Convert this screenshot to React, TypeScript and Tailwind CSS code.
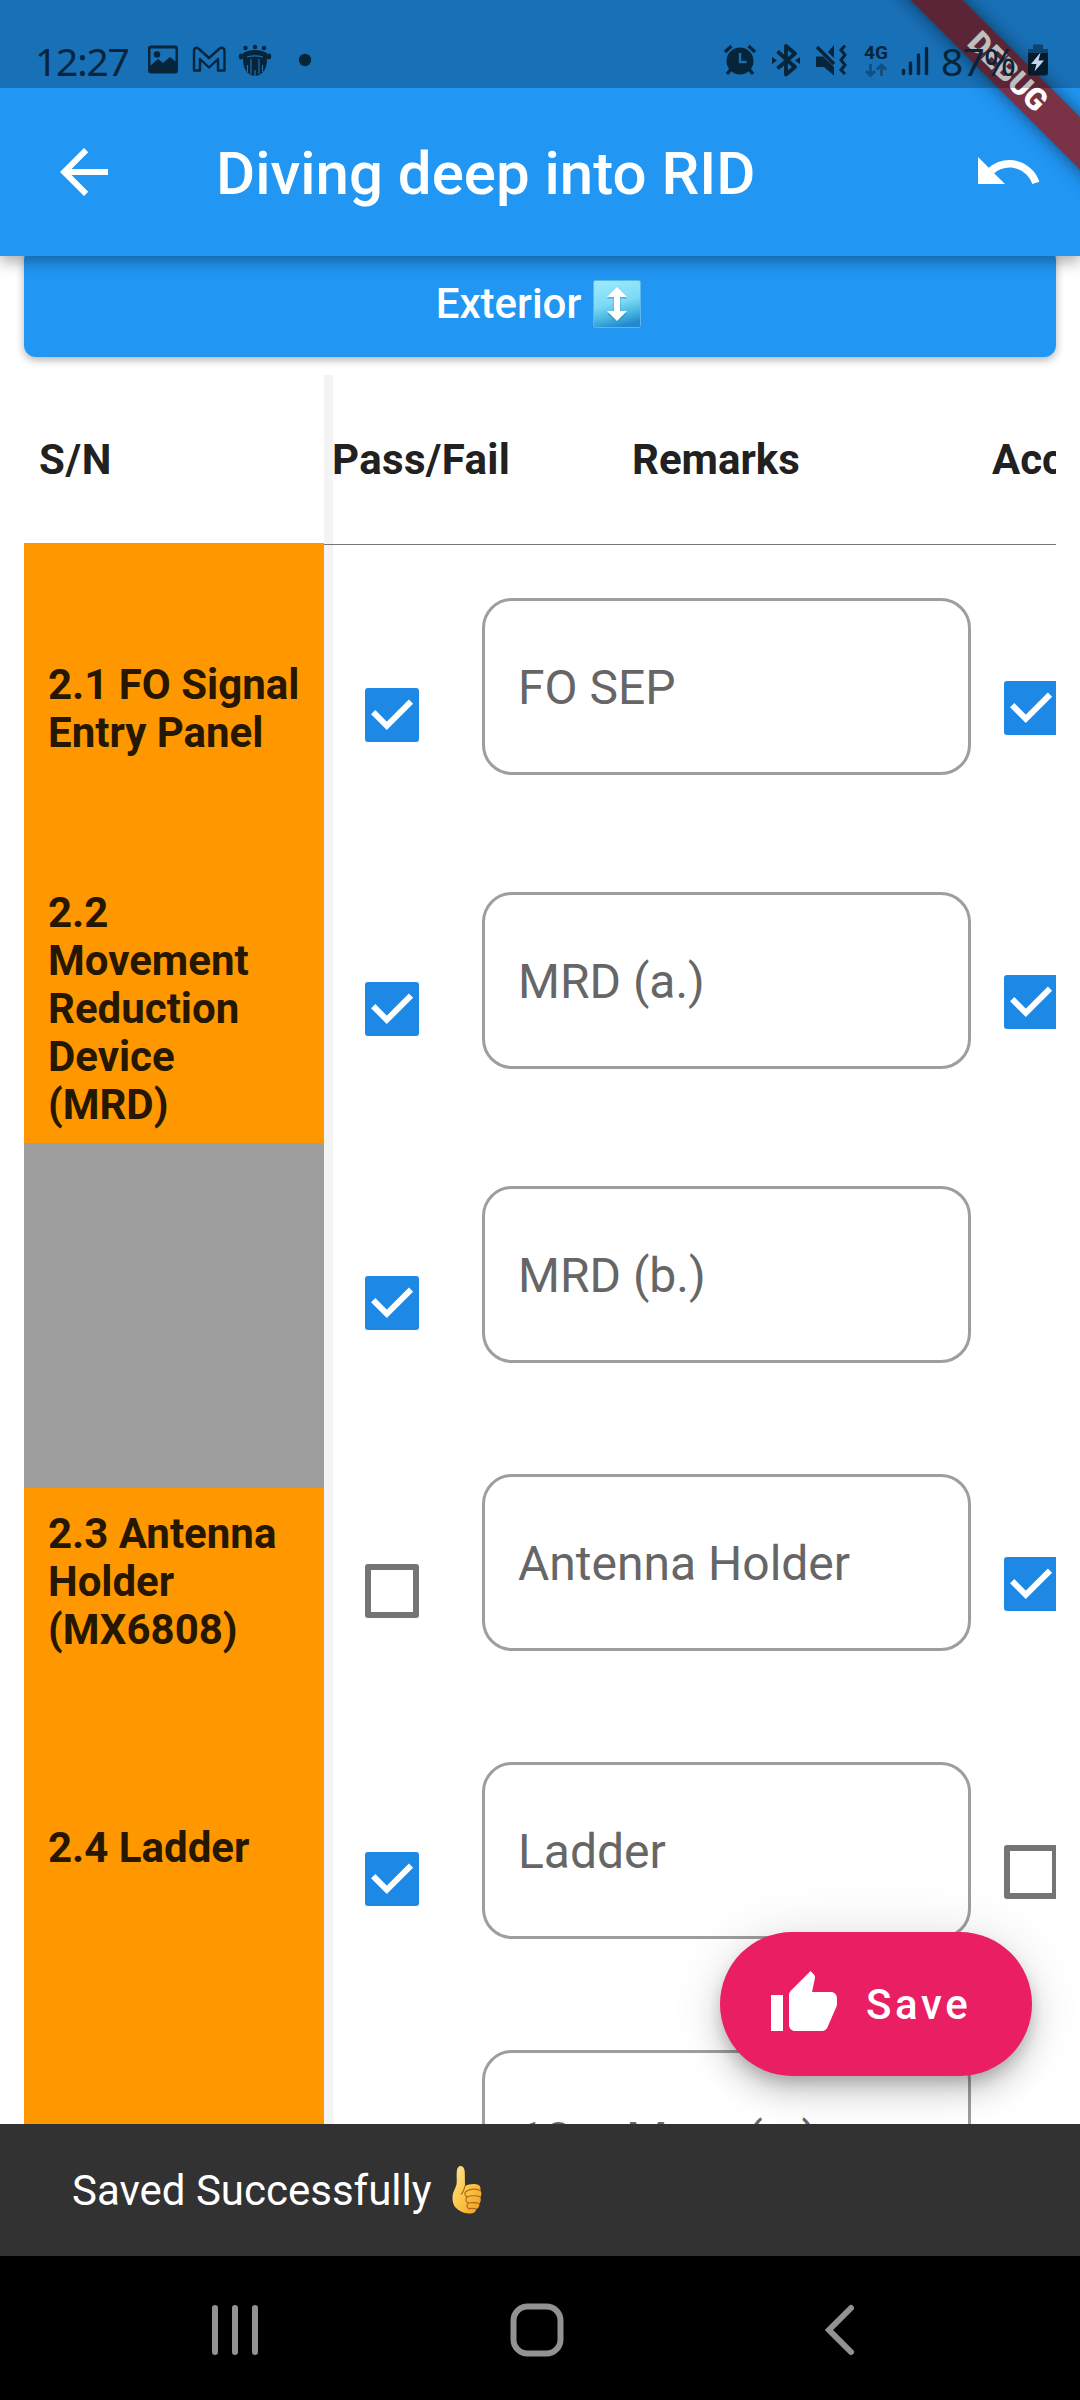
import React from "react";

const sections = [
  { text: "2.1 FO Signal Entry Panel", cls: "h-[332px] bg-[#ff9800]" },
  { text: "2.2 Movement Reduction Device (MRD)", cls: "h-[268px] bg-[#ff9800]" },
  { text: "", cls: "h-[345px] bg-[#9e9e9e]" },
  { text: "2.3 Antenna Holder (MX6808)", cls: "h-[188px] bg-[#ff9800]" },
  { text: "2.4 Ladder", cls: "h-[344px] bg-[#ff9800]" },
  { text: "", cls: "h-[120px] bg-[#ff9800]" },
];

type Mark = "on" | "off" | "none";

const rows: { label: string; pass: Mark; acc: Mark; h: string }[] = [
  { label: "FO SEP", pass: "on", acc: "on", h: "h-[294px]" },
  { label: "MRD (a.)", pass: "on", acc: "on", h: "h-[294px]" },
  { label: "MRD (b.)", pass: "on", acc: "none", h: "h-[288px]" },
  { label: "Antenna Holder", pass: "off", acc: "on", h: "h-[288px]" },
  { label: "Ladder", pass: "on", acc: "off", h: "h-[288px]" },
  { label: "10m Mast (a.)", pass: "none", acc: "none", h: "h-[288px]" },
];

function Check({ state }: { state: Mark }) {
  if (state === "none") return <div className="size-[54px] shrink-0" />;
  if (state === "off")
    return <div className="size-[54px] shrink-0 rounded-[3px] border-6 border-[#757575]" />;
  return (
    <div className="size-[54px] shrink-0 rounded-[3px] bg-[#1e88e5]">
      <svg viewBox="0 0 54 54" className="size-[54px]" fill="none" stroke="#fff" strokeWidth="6">
        <path d="M8.2 24.2 21.8 37.8 46 13.6" />
      </svg>
    </div>
  );
}

function NotificationIcons() {
  return (
    <svg width="180" height="50" viewBox="0 0 180 50" fill="#06243a">
      <path
        fillRule="evenodd"
        d="M11 10.500h24a3 3 0 0 1 3 3v22a3 3 0 0 1-3 3H11a3 3 0 0 1-3-3v-22a3 3 0 0 1 3-3zm-.5 3v17l7.500-6.500 5 4 7-6 5.500 4.500v-13z"
      />
      <circle cx="17" cy="19.500" r="3.200" />
      <path
        d="M54 35.500V16c0-3.500 3-4 5-2l10 9 10-9c2-2 5.500-1.500 5.500 2v19.500H78V24l-9 8.500L60 24v11.500z"
        fill="none"
        stroke="#06243a"
        strokeWidth="2.400"
        strokeLinejoin="round"
      />
      <circle cx="105.500" cy="13" r="2.200" />
      <circle cx="115" cy="12" r="2.200" />
      <circle cx="124" cy="13" r="2.200" />
      <ellipse cx="101" cy="21.500" rx="2.200" ry="3" />
      <ellipse cx="129" cy="21.500" rx="2.200" ry="3" />
      <path d="M103 18c7-4 17-4 24 0v6c0 10-4 16-12 17-8-1-12-7-12-17z" />
      <g stroke="#1a6fb6" strokeWidth="1.200" fill="none">
        <path d="M107 22c5-1.500 11-1.500 16 0M111 24v15M119 24v15M107.500 30v7M122.500 30v7M115 35v6" />
      </g>
      <circle cx="165" cy="25" r="6.200" />
    </svg>
  );
}

function DeviceIcons() {
  return (
    <svg width="140" height="50" viewBox="0 0 140 50" fill="#06243a">
      <circle cx="25" cy="26" r="13.500" />
      <g stroke="#06243a" strokeWidth="3.200" fill="none">
        <path d="M10 17l6.500-6M40 17l-6.500-6M16 34l-4 5M34 34l4 5" />
      </g>
      <path d="M25 18v9h6.500" stroke="#1a6fb6" strokeWidth="2.400" fill="none" />
      <path d="M62.500 16.500 80 32l-9 7.500V11l9 7.500-17.500 15" stroke="#06243a" strokeWidth="3.800" fill="none" strokeLinejoin="round" />
      <path d="M57 22l5 3.500-5 3.500zM85 22l-5 3.500 5 3.500z" />
      <path d="M101 21.500h7L119 32v8.500L109 32h-8zM119 10v13l-6-6z" />
      <path d="M102 12l17 17" stroke="#06243a" strokeWidth="3.400" />
      <path d="M130 10.500l-4 4.500 4 5-4 5 4 5-4 5 4 4" stroke="#06243a" strokeWidth="3" fill="none" />
    </svg>
  );
}

function StatusBar() {
  return (
    <div className="absolute inset-x-0 top-0 z-30 flex h-[88px] items-start bg-black/25 pt-[35px] font-['Noto_Sans',sans-serif] text-[39px] leading-[50px] text-[#06243a]">
      <span className="w-[105px] pl-[35px] pt-px whitespace-nowrap tracking-[-1.2px]">12:27</span>
      <div className="ml-[35px]"><NotificationIcons /></div>
      <div className="ml-[395px]"><DeviceIcons /></div>
      <div className="ml-[9px] mt-[8px] flex w-[24px] flex-col items-center">
        <span className="font-['Roboto',sans-serif] text-[19px] font-bold leading-[19px]">4G</span>
        <svg width="24" height="16" viewBox="0 0 24 16" fill="none" stroke="#11507f" strokeWidth="3">
          <path d="M6.500 2v11M2 9l4.500 4.500L11 9M17.500 14V3M13 7.500 17.500 3 22 7.500" />
        </svg>
      </div>
      <svg className="ml-[12px]" width="32" height="50" viewBox="0 0 32 50" stroke="#06243a" strokeWidth="3.400" strokeLinecap="round">
        <path d="M3.500 35.500v3M10.500 28v10.500M18.500 20v18.500M26.500 13.500v25" />
      </svg>
      <span className="ml-[9px] w-[80px] pt-px whitespace-nowrap tracking-[-0.9px]">87%</span>
      <svg className="ml-[6px]" width="22" height="50" viewBox="0 0 22 50">
        <path d="M6 9.500h10V14h5v5H1v-5h5z" fill="#0f426c" />
        <path d="M1 18h20v20a2.500 2.500 0 0 1-2.500 2.500h-15A2.500 2.500 0 0 1 1 38z" fill="#041b2b" />
        <path d="M13.500 17.500 4 29h5.500L7.500 36.500 17 25.500h-5.500z" fill="#c3d6ee" />
      </svg>
    </div>
  );
}

function UpDownEmoji() {
  return (
    <svg role="img" aria-label="↕️" width="48" height="48" viewBox="0 0 48 48">
      <defs>
        <linearGradient id="tile" x1="0.25" y1="0" x2="0.5" y2="1">
          <stop offset="0" stopColor="#9be9fc" />
          <stop offset="0.5" stopColor="#7bdaf4" />
          <stop offset="0.75" stopColor="#4cb8e2" />
          <stop offset="1" stopColor="#2189cd" />
        </linearGradient>
      </defs>
      <rect x="0.500" y="0.500" width="47" height="47" rx="2" fill="url(#tile)" stroke="#57b9e4" />
      <path d="M24 8l10 10.500h-6.500v15H34L24 42 14 33.500h6.500v-15H14z" fill="#1c75a8" opacity=".45" />
      <path d="M24 7l10 10h-7v14h7L24 41 14 31h7V17h-7z" fill="#fff" />
    </svg>
  );
}

function ThumbEmoji() {
  return (
    <svg role="img" aria-label="👍" width="34" height="50" viewBox="0 0 34 50">
      <defs>
        <linearGradient id="skin" x1="0" y1="0" x2="1" y2="1">
          <stop offset="0" stopColor="#ffe49a" />
          <stop offset="0.5" stopColor="#fdc748" />
          <stop offset="1" stopColor="#ee9a1f" />
        </linearGradient>
      </defs>
      <path
        d="M10.500 1c3 0 4.300 3 4.300 7L15 21c3-1.500 8-2.500 12-1.500 3 .5 4 3 3.300 6 1.500 1.700 1.500 4.500 0 6.500 1 2.500.5 5-1 6.500.3 3-.7 4.700-3 5.500-.5 3.500-3 4.700-7 4.500-4-.3-7-1-10-3-5-3-6.800-7-6.800-12.500 0-6 2.500-8.500 4-13.500C7.200 16 6.300 11 6.800 6c.3-3 1.700-5 3.700-5z"
        fill="url(#skin)"
      />
      <path
        d="M15 21c-1 3-1 5-3.500 8M30 25.500c-4-2-10-2-14 1-2.500 2.500-.5 5 2 5.500M30.500 32c-4-1.500-9-1.500-13-.5-3 2.500-1.500 5.500 1 6.500M29.500 38.500c-4-1-7-1-11-.5-2.500 2-1.500 5 1 6M26.500 44c-2.500-.8-5-.8-7-.5"
        fill="none"
        stroke="#b0671a"
        strokeWidth="1.200"
        strokeLinecap="round"
      />
    </svg>
  );
}

function DebugBanner() {
  return (
    <div className="absolute right-0 top-0 z-20 size-[240px] overflow-hidden">
      <div className="absolute left-[-32px] top-[53px] flex h-[37px] w-[400px] rotate-45 items-center justify-center bg-[#931616]/78 text-[30.6px] font-black leading-[36px] text-white shadow-[0_0_18px_rgba(0,0,0,0.5)]">
        DEBUG
      </div>
    </div>
  );
}

export default function App() {
  return (
    <div className="relative flex h-[2400px] w-[1080px] flex-col overflow-hidden bg-white font-['Roboto',sans-serif] text-[42px] leading-[48px]">
      <header className="relative z-10 flex h-[256px] shrink-0 flex-col bg-[#2196f3] pt-[88px] shadow-[0_6px_14px_rgba(0,0,0,0.32)]">
        <div className="flex h-[168px] items-center">
          <svg className="ml-[48px] size-[72px]" viewBox="0 0 24 24" fill="#fff">
            <path d="M20 11H7.830l5.590-5.590L12 4l-8 8 8 8 1.410-1.410L7.830 13H20v-2z" />
          </svg>
          <h1 className="ml-[96px] grow pt-[3px] text-[60px] font-medium leading-[70px] text-white">Diving deep into RID</h1>
          <svg className="mr-[36px] size-[72px]" viewBox="0 0 24 24" fill="#fff">
            <path d="M12.500 8c-2.650 0-5.050.99-6.900 2.600L2 7v9h9l-3.620-3.620c1.390-1.160 3.160-1.880 5.120-1.880 3.540 0 6.550 2.310 7.600 5.500l2.370-.78C21.080 11.030 17.150 8 12.500 8z" />
          </svg>
        </div>
      </header>
      <StatusBar />
      <DebugBanner />

      <div className="mx-6 -mt-[8px] flex h-[109px] shrink-0 items-center justify-center gap-[12px] rounded-[12px] bg-[#2196f3] pr-[3px] pt-[2px] font-medium text-white shadow-[0_3px_8px_rgba(0,0,0,0.3)]">
        <span>Exterior</span>
        <UpDownEmoji />
      </div>

      <main className="mx-6 mt-[18px] flex h-[1749px] shrink-0 overflow-hidden text-[#212121]">
        <div className="w-[300px] shrink-0 font-bold">
          <div className="flex h-[168px] items-center pl-[15px] pt-[2px] tracking-[0.6px]">S/N</div>
          {sections.map((c, i) => (
            <div key={i} className={"flex items-center pl-6 text-[#261700] " + c.cls}>
              <span className="w-[254px]">{c.text}</span>
            </div>
          ))}
        </div>
        <div className="w-[9px] shrink-0 bg-[#f4f4f4]">
          <div className="h-[170px] border-b border-[#757575]" />
        </div>
        <div className="w-[900px] shrink-0">
          <div className="flex h-[170px] items-center border-b border-[#757575] font-bold">
            <span className="-ml-px w-[300px] tracking-[0.35px]">Pass/Fail</span>
            <span className="w-[360px]">Remarks</span>
            <span>Acceptance</span>
          </div>
          {rows.map((r) => (
            <div key={r.label} className={"flex items-start pl-8 " + r.h}>
              <div className="pt-[143px]"><Check state={r.pass} /></div>
              <div className="ml-[63px] mt-[53px] flex h-[177px] w-[489px] shrink-0 items-center rounded-[30px] border-3 border-[#9e9e9e] pl-[33px] pt-[2px] text-[48px] leading-[56px] text-[#666666]">
                {r.label}
              </div>
              <div className="ml-[33px] pt-[136px]"><Check state={r.acc} /></div>
            </div>
          ))}
        </div>
      </main>

      <button className="absolute left-[720px] top-[1932px] flex h-[144px] w-[312px] items-center rounded-full bg-[#e91e63] pl-[48px] text-[42px] font-medium tracking-[3.6px] text-white shadow-[0_9px_15px_-3px_rgba(0,0,0,0.2),0_18px_30px_rgba(0,0,0,0.14),0_3px_54px_rgba(0,0,0,0.12)]">
        <svg className="size-[72px]" viewBox="0 0 24 24" fill="#fff">
          <path d="M1 21h4V9H1v12zm22-11c0-1.100-.9-2-2-2h-6.310l.95-4.570.03-.32c0-.41-.17-.79-.44-1.060L14.170 1 7.590 7.590C7.220 7.950 7 8.450 7 9v10c0 1.100.9 2 2 2h9c.83 0 1.540-.5 1.840-1.220l3.020-7.050c.09-.23.14-.47.14-.73v-2z" />
        </svg>
        <span className="ml-[26px] pt-[2px]">Save</span>
      </button>

      <div className="relative z-10 flex h-[132px] shrink-0 items-center gap-[18px] bg-[#323232] pl-[72px] text-white">
        <span className="pt-[2px]">Saved Successfully</span>
        <ThumbEmoji />
      </div>

      <nav className="relative z-10 h-[144px] shrink-0 bg-black">
        <div className="flex h-[148px] items-center pl-[211px]">
          <svg width="48" height="54" viewBox="0 0 48 54" stroke="#929292" strokeWidth="6" strokeLinecap="round">
            <path d="M4 5v44M24 5v44M44 5v44" />
          </svg>
          <svg className="ml-[250px]" width="56" height="56" viewBox="0 0 56 56" fill="none" stroke="#929292" strokeWidth="6">
            <rect x="4.500" y="4.500" width="47" height="47" rx="14" />
          </svg>
          <svg className="ml-[258px]" width="34" height="54" viewBox="0 0 34 54" fill="none" stroke="#929292" strokeWidth="6" strokeLinecap="round">
            <path d="M28 5 6 27l22 22" />
          </svg>
        </div>
      </nav>
    </div>
  );
}
